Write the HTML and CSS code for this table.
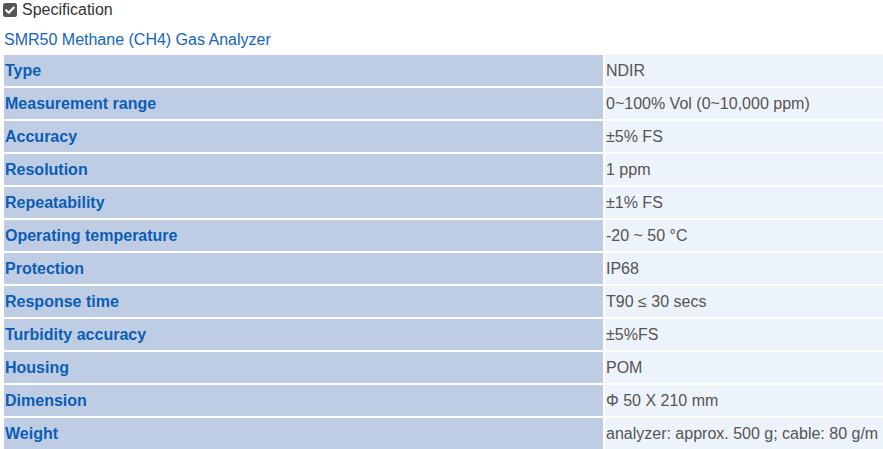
FILE: index.html
```html
<!DOCTYPE html>
<html>
<head>
<meta charset="utf-8">
<link rel="stylesheet" href="styles.css">
</head>
<body>
<div class="page">
  <div class="section-head">
    <svg class="check" width="14" height="14" viewBox="0 0 14 14"><rect x="0" y="0" width="14" height="14" rx="2.5" fill="#555"/><path d="M3.2 7.2 L5.8 9.8 L10.8 4.6" stroke="#fff" stroke-width="2.2" fill="none" stroke-linecap="round" stroke-linejoin="round"/></svg>
    <span>Specification</span>
  </div>
  <div class="product">SMR50 Methane (CH4) Gas Analyzer</div>
  <table class="spec">
    <tr><th>Type</th><td>NDIR</td></tr>
    <tr><th>Measurement range</th><td>0~100% Vol (0~10,000 ppm)</td></tr>
    <tr><th>Accuracy</th><td>±5% FS</td></tr>
    <tr><th>Resolution</th><td>1 ppm</td></tr>
    <tr><th>Repeatability</th><td>±1% FS</td></tr>
    <tr><th>Operating temperature</th><td>-20 ~ 50 °C</td></tr>
    <tr><th>Protection</th><td>IP68</td></tr>
    <tr><th>Response time</th><td>T90 ≤ 30 secs</td></tr>
    <tr><th>Turbidity accuracy</th><td>±5%FS</td></tr>
    <tr><th>Housing</th><td>POM</td></tr>
    <tr><th>Dimension</th><td>Φ 50 X 210 mm</td></tr>
    <tr><th>Weight</th><td>analyzer: approx. 500 g; cable: 80 g/m</td></tr>
  </table>
</div>
</body>
</html>
```
FILE: styles.css
```css
html, body {
  margin: 0;
  padding: 0;
  overflow: hidden;
  background: #fff;
}
.page {
  font-family: "Liberation Sans", Arial, sans-serif;
  width: 900px;
  padding-left: 2px;
}
.section-head {
  display: flex;
  align-items: center;
  gap: 5px;
  height: 20px;
  padding-left: 1px;
  font-size: 16px;
  color: #333;
}
.check {
  display: block;
}
.product {
  margin-top: 10px;
  padding-left: 2px;
  height: 23px;
  line-height: 20px;
  font-size: 16px;
  color: #1565b8;
}
.spec {
  border-collapse: separate;
  border-spacing: 2px;
  width: 900px;
  font-size: 16px;
}
.spec tr {
  height: 31px;
}
.spec th {
  width: 597px;
  padding: 0 1px;
  text-align: left;
  font-weight: bold;
  color: #0b5db5;
  background: #bfcde4;
}
.spec td {
  padding: 0 0 0 1px;
  color: #555;
  background: #edf3fb;
}
```
